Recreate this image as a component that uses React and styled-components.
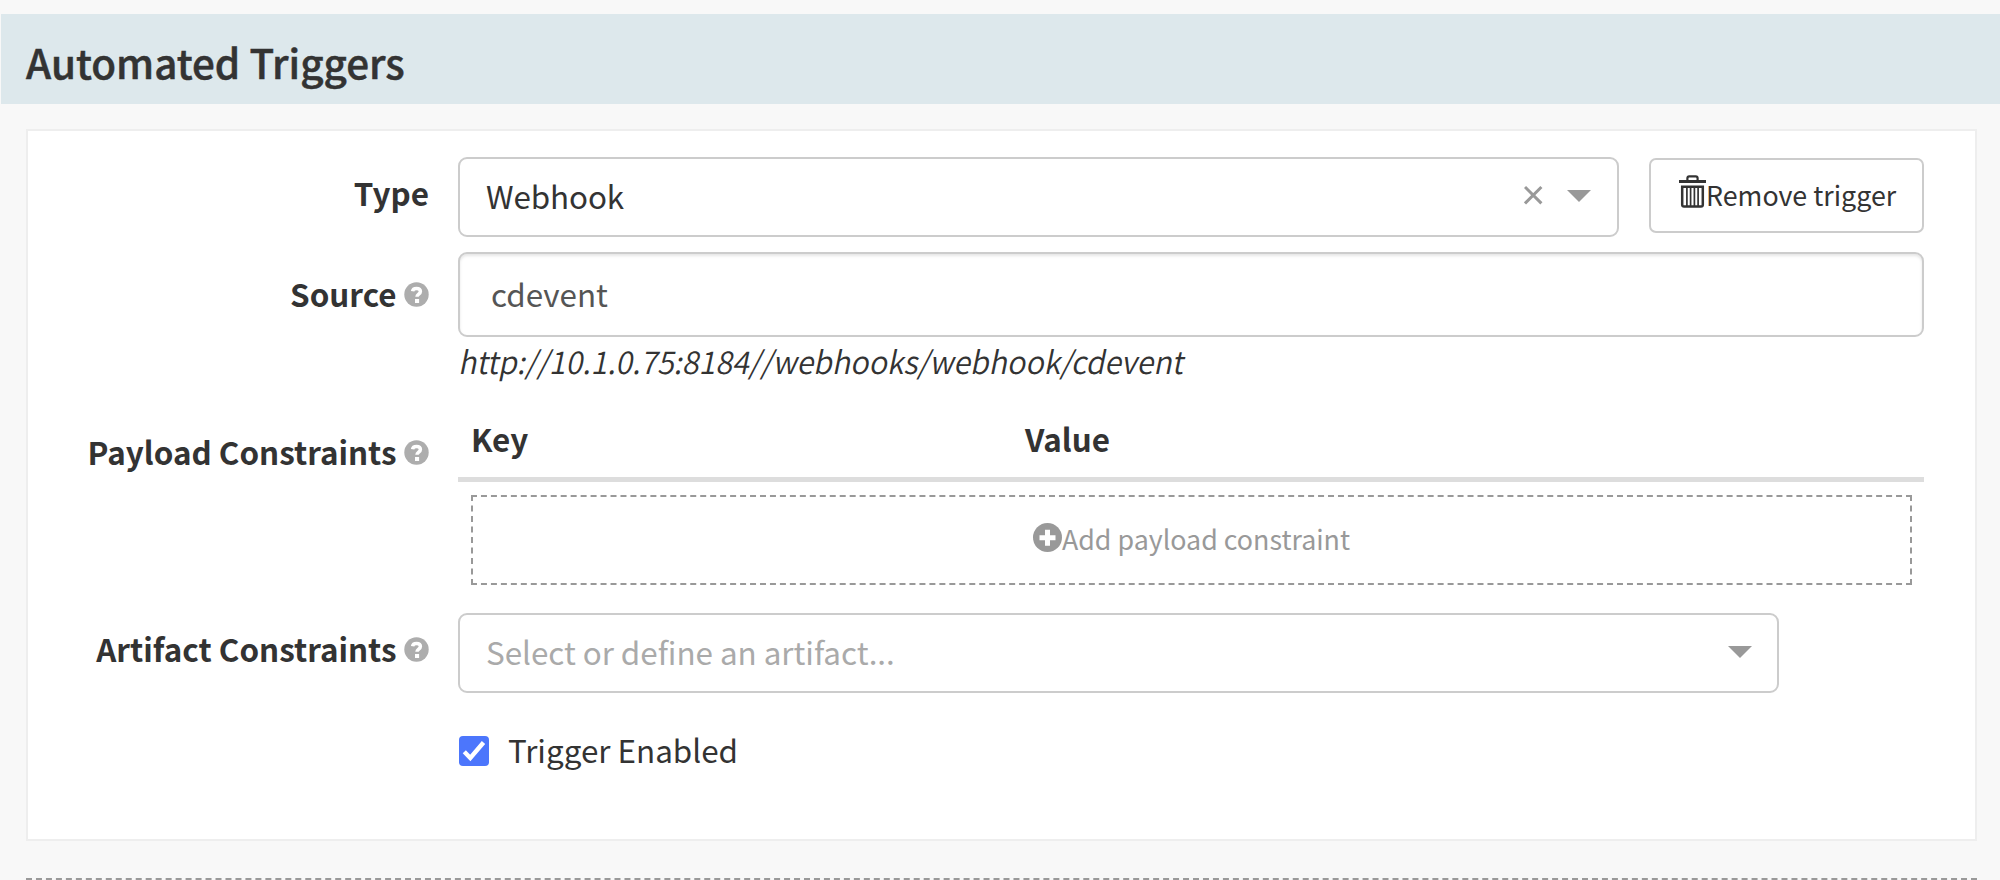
import React from 'react';
import styled, { createGlobalStyle } from 'styled-components';

const GlobalStyle = createGlobalStyle`
  * { box-sizing: border-box; }
  body {
    margin: 0;
    height: 880px;
    overflow: hidden;
    background: #f8f8f8;
    color: #333;
    font-family: "Noto Sans CJK SC", "Noto Sans", sans-serif;
    font-size: 31.4px;
    line-height: 40px;
  }
  svg { display: block; flex: none; }
`;

const Page = styled.main`
  display: flex;
  flex-direction: column;
  height: 880px;
  overflow: hidden;
  padding-top: 14px;
`;

const Header = styled.header`
  flex: none;
  height: 90px;
  margin-left: 1px;
  padding-left: 25px;
  background: #dde8ec;
`;

const Title = styled.h1`
  margin: 0;
  font-size: 40.4px;
  font-weight: 500;
  line-height: 95px;
  -webkit-text-stroke: 0.5px #333;
`;

const Card = styled.section`
  flex: none;
  display: flex;
  flex-direction: column;
  height: 712px;
  margin: 25px 23px 0 26px;
  padding: 26px 0 0 28px;
  background: #fff;
  border: 2px solid #eee;
`;

const FormRow = styled.div`
  display: grid;
  grid-template-columns: 373px 1466px;
  column-gap: 29px;
  align-items: start;
  margin-bottom: ${(p) => p.$gap || 0}px;
`;

const Label = styled.div`
  display: flex;
  justify-content: flex-end;
  gap: 7.5px;
  margin-top: ${(p) => p.$top}px;
  font-weight: 700;
  white-space: nowrap;

  svg { margin-top: 8px; }
`;

const Field = styled.div`
  grid-column: 2;
`;

const TypeField = styled(Field)`
  display: flex;
  align-items: flex-start;
  gap: 30px;
`;

const Select = styled.div`
  display: flex;
  width: ${(p) => p.$width}px;
  height: 80px;
  padding: 0 ${(p) => p.$right}px 0 26px;
  border: 2px solid #ccc;
  border-radius: 9px;
  color: ${(p) => (p.$placeholder ? '#aaa' : '#333')};
  line-height: 73px;
`;

const SelectText = styled.span`
  flex: 1;
  letter-spacing: ${(p) => p.$spacing || 0}px;
`;

const Caret = styled.span`
  margin-top: 31px;
  width: 0;
  height: 0;
  border: 12.5px solid transparent;
  border-top-color: #999;
  border-bottom: 0;
`;

const ClearIcon = styled.svg`
  margin: 26px 24px 0 0;
`;

const RemoveButton = styled.button`
  display: flex;
  width: 275px;
  height: 75px;
  margin-top: 1px;
  padding: 0 0 0 28px;
  background: #fff;
  border: 2px solid #ccc;
  border-radius: 7px;
  color: #333;
  font: inherit;
  font-size: 26.8px;
  line-height: 70px;
  white-space: nowrap;

  svg { margin-top: 15px; }
`;

const TextInput = styled.input`
  display: block;
  width: 100%;
  height: 85px;
  padding: 0 31px 3px;
  background: #fff;
  border: 2px solid #ccc;
  border-radius: 9px;
  box-shadow: inset 0 2px 3px rgba(0, 0, 0, 0.1);
  color: #555;
  font: inherit;
  outline: 0;
`;

const Url = styled.i`
  display: block;
  width: max-content;
  margin-top: 4px;
  font-weight: 350;
  transform: skewX(2deg) scaleX(0.969);
  transform-origin: 0 34px;
`;

const TableHead = styled.div`
  display: grid;
  grid-template-columns: 554px 1fr;
  height: 63px;
  padding-left: 13px;
  border-bottom: 5px solid #ddd;
  font-weight: 700;
`;

const AddButton = styled.button`
  display: flex;
  justify-content: center;
  width: 1441px;
  height: 90px;
  margin: 13px 0 0 13px;
  padding: 0;
  background: none;
  border: 2px dashed #999;
  color: #999;
  font: inherit;
  font-size: 26.8px;
  line-height: 84px;

  svg { margin: 26px 0 0 0; }
`;

const EnabledLabel = styled.label`
  display: flex;
  gap: 19px;
  padding-left: 1px;
`;

const Checkbox = styled.span`
  display: flex;
  width: 30px;
  height: 30px;
  margin-top: 6px;
  background: #4c76fc;
  border-radius: 4px;
`;

const NextSection = styled.div`
  flex: none;
  height: 90px;
  margin: 37px 23px 0 26px;
  border: 2px dashed #999;
`;

const HelpIcon = () => (
  <svg width="25" height="25" viewBox="0 0 25 25">
    <circle cx="12.5" cy="12.5" r="12.2" fill="#adadad" />
    <path
      d="M8.6 9.2C8.8 7.4 10.2 6.4 12.5 6.4c2.4 0 3.9 1.1 3.9 3 0 2.6-3.4 2.7-3.4 5.3"
      fill="none"
      stroke="#fff"
      strokeWidth="3.5"
    />
    <path d="M11 17h4.1v4H11z" fill="#fff" />
  </svg>
);

const TrashIcon = () => (
  <svg width="27" height="33" viewBox="0 0 27 33" fill="none" stroke="#333" strokeWidth="2.2">
    <path d="M0 6.5h27" strokeWidth="3" />
    <path d="M8.4 6V3.2q0-1.9 1.9-1.9h6.4q1.9 0 1.9 1.9V6" />
    <path d="M3.2 11.8h20.6v18q0 1.8-1.8 1.8H5q-1.8 0-1.8-1.8z" strokeWidth="2.5" />
    <path d="M7.9 12v20M11.6 12v20M15.4 12v20M19.1 12v20" strokeWidth="1.7" />
  </svg>
);

const PlusIcon = () => (
  <svg width="29" height="29" viewBox="0 0 29 29">
    <circle cx="14.5" cy="14.5" r="14.5" fill="#999" />
    <path d="M14.5 6.8v16M6.5 14.8h16" stroke="#fff" strokeWidth="5" />
  </svg>
);

export default function App() {
  return (
    <Page>
      <GlobalStyle />
      <Header>
        <Title>Automated Triggers</Title>
      </Header>
      <Card>
        <FormRow $gap={15}>
          <Label $top={16}>Type</Label>
          <TypeField>
            <Select $width={1161} $right={26}>
              <SelectText $spacing={-0.1}>Webhook</SelectText>
              <ClearIcon width="19" height="20" viewBox="0 0 19 20">
                <path d="M1 2l16.4 16.4M17.4 2L1 18.4" stroke="#999" strokeWidth="3" />
              </ClearIcon>
              <Caret />
            </Select>
            <RemoveButton>
              <TrashIcon />
              Remove trigger
            </RemoveButton>
          </TypeField>
        </FormRow>
        <FormRow $gap={38}>
          <Label $top={22}>
            Source
            <HelpIcon />
          </Label>
          <Field>
            <TextInput defaultValue="cdevent" />
            <Url>http://10.1.0.75:8184//webhooks/webhook/cdevent</Url>
          </Field>
        </FormRow>
        <FormRow $gap={28}>
          <Label $top={13}>
            Payload Constraints
            <HelpIcon />
          </Label>
          <Field>
            <TableHead>
              <span>Key</span>
              <span>Value</span>
            </TableHead>
            <AddButton>
              <PlusIcon />
              Add payload constraint
            </AddButton>
          </Field>
        </FormRow>
        <FormRow $gap={37}>
          <Label $top={16}>
            Artifact Constraints
            <HelpIcon />
          </Label>
          <Field>
            <Select $width={1321} $right={25} $placeholder>
              <SelectText $spacing={-0.03}>Select or define an artifact...</SelectText>
              <Caret />
            </Select>
          </Field>
        </FormRow>
        <FormRow>
          <Field>
            <EnabledLabel>
              <Checkbox>
                <svg width="30" height="30" viewBox="0 0 30 30">
                  <path d="M5.3 15.8l6 6.2L24.5 6.5" fill="none" stroke="#fff" strokeWidth="4.4" />
                </svg>
              </Checkbox>
              Trigger Enabled
            </EnabledLabel>
          </Field>
        </FormRow>
      </Card>
      <NextSection />
    </Page>
  );
}
